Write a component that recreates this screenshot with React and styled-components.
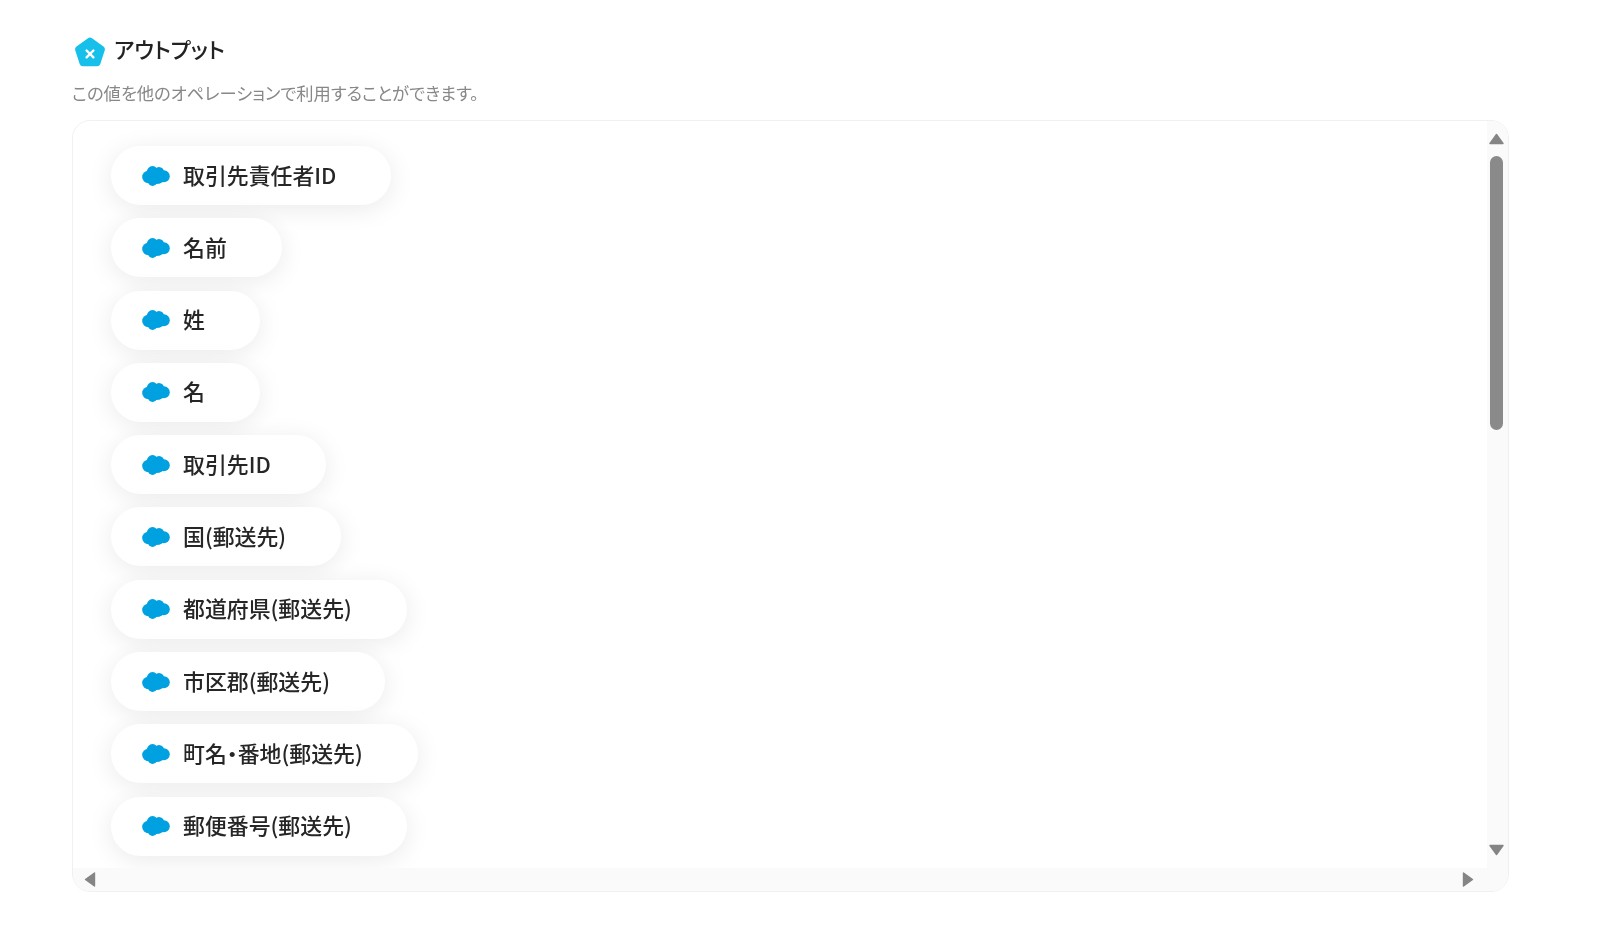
import React from "react";
import styled, { createGlobalStyle } from "styled-components";

const Global = createGlobalStyle`
  html, body { margin: 0; padding: 0; background: #fff; }
  body {
    font-family: "Noto Sans CJK JP", "Noto Sans", sans-serif;
    font-feature-settings: "palt" 1;
  }
`;

const Page = styled.main`
  width: 1600px;
  height: 948px;
  box-sizing: border-box;
  padding: 36px 91px 0 72px;
  overflow: hidden;
  filter: blur(0.45px);
`;

const Header = styled.header`
  display: flex;
  align-items: center;
  gap: 8px;
  height: 32px;
  padding-left: 2px;
`;

const Title = styled.h2`
  margin: -6px 0 0;
  font-size: 21.8px;
  line-height: 32px;
  font-weight: 500;
  color: #222;
`;

const Description = styled.p`
  margin: 13px 0 0;
  font-size: 17.3px;
  line-height: 24px;
  color: #888;
`;

const Frame = styled.section`
  margin-top: 15px;
  width: 1437px;
  height: 772px;
  box-sizing: border-box;
  border: 1px solid #f0f0f0;
  border-radius: 18px;
  overflow: hidden;
  display: grid;
  grid-template-columns: 1fr 21px;
  grid-template-rows: 1fr 23px;
`;

const List = styled.ul`
  list-style: none;
  margin: 0;
  padding: 25px 0 0 38px;
  overflow: hidden;
  display: flex;
  flex-direction: column;
  align-items: flex-start;
  gap: 13.3px;
`;

const Pill = styled.li`
  flex: none;
  display: flex;
  align-items: center;
  gap: 13px;
  height: 59px;
  box-sizing: border-box;
  padding: 0 55px 0 31px;
  border-radius: 30px;
  background: #fff;
  box-shadow: 0 4px 26px rgba(0, 0, 0, 0.085);
  font-size: 21.9px;
  font-weight: 500;
  color: #262626;
  white-space: nowrap;
`;

const Label = styled.span`
  margin-top: -3px;
`;

const VerticalBar = styled.div`
  background: #fafafa;
  display: flex;
  flex-direction: column;
  align-items: center;
  padding: 11px 3px 0 0;
`;

const HorizontalBar = styled.div`
  grid-column: 1 / 3;
  background: #fafafa;
  display: flex;
  align-items: center;
  justify-content: space-between;
  padding: 0 33px 0 10px;
`;

const Thumb = styled.div`
  width: 13px;
  height: 274px;
  margin: 9px 0 auto;
  border-radius: 7px;
  background: #8a8a8a;
`;

const Arrow = styled.svg`
  display: block;
  flex: none;
  margin-bottom: ${p => p.$bottom || 0}px;
`;

const Triangle = ({ dir, bottom }) => {
  const rot = { up: 0, right: 90, down: 180, left: 270 }[dir];
  return (
    <Arrow $bottom={bottom} width="15" height="15" viewBox="0 0 15 15">
      <path
        transform={`rotate(${rot} 7.5 7.5)`}
        d="M7.5 2.5 L14 11.5 H1 Z"
        fill="#858585"
        stroke="#858585"
        strokeWidth="1.4"
        strokeLinejoin="round"
      />
    </Arrow>
  );
};

const Logo = () => (
  <svg width="32" height="31" viewBox="0 0 32 31">
    <path
      d="M14 1.3a3.4 3.4 0 0 1 4 0l11.5 8.3a3.4 3.4 0 0 1 1.2 3.8l-4.4 13.5a3.4 3.4 0 0 1-3.2 2.4H8.9a3.4 3.4 0 0 1-3.2-2.4L1.3 13.4a3.4 3.4 0 0 1 1.2-3.8z"
      fill="#17c0ea"
    />
    <path d="M12.600 13.500l6.800 6.800M19.400 13.500l-6.800 6.800" stroke="#fff" strokeWidth="2.4" strokeLinecap="round" />
  </svg>
);

const CloudIcon = styled.svg`
  flex: none;
`;

const Cloud = () => (
  <CloudIcon width="28" height="22" viewBox="0 0 28 22">
    <ellipse cx="6.500" cy="12" rx="6.300" ry="6.200" fill="#00a1e0" />
    <ellipse cx="10.500" cy="7.300" rx="5.800" ry="6.200" fill="#00a1e0" />
    <ellipse cx="17" cy="7.300" rx="5.200" ry="5.200" fill="#00a1e0" />
    <ellipse cx="21.800" cy="11.200" rx="6" ry="6" fill="#00a1e0" />
    <ellipse cx="14" cy="13.500" rx="8.500" ry="5.600" fill="#00a1e0" />
    <ellipse cx="10.500" cy="16" rx="4.600" ry="5" fill="#00a1e0" />
  </CloudIcon>
);

const items = [
  "取引先責任者ID",
  "名前",
  "姓",
  "名",
  "取引先ID",
  "国(郵送先)",
  "都道府県(郵送先)",
  "市区郡(郵送先)",
  "町名・番地(郵送先)",
  "郵便番号(郵送先)",
];

export default function App() {
  return (
    <Page>
      <Global />
      <Header>
        <Logo />
        <Title>アウトプット</Title>
      </Header>
      <Description>この値を他のオペレーションで利用することができます。</Description>
      <Frame>
        <List>
          {items.map(t => (
            <Pill key={t}>
              <Cloud />
              <Label>{t}</Label>
            </Pill>
          ))}
        </List>
        <VerticalBar>
          <Triangle dir="up" />
          <Thumb />
          <Triangle dir="down" bottom={11} />
        </VerticalBar>
        <HorizontalBar>
          <Triangle dir="left" />
          <Triangle dir="right" />
        </HorizontalBar>
      </Frame>
    </Page>
  );
}
